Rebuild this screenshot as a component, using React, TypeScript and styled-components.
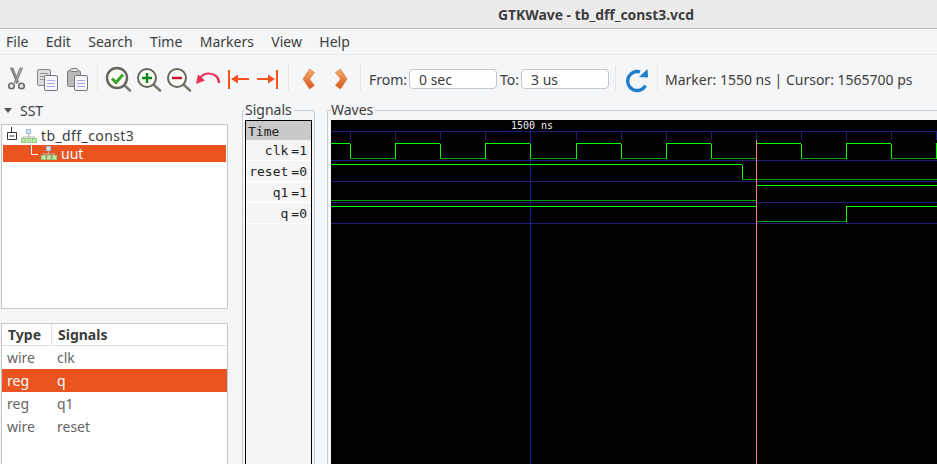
import styled, { createGlobalStyle } from 'styled-components'

const UI_FONT = '"Noto Sans", "Open Sans", sans-serif'
const MONO_FONT = '"DejaVu Sans Mono", "Liberation Mono", monospace'
const ORANGE = '#e95420'

const GlobalStyle = createGlobalStyle`
  html, body {
    margin: 0;
    padding: 0;
    background: #f5f6f7;
  }
`

const Window = styled.div`
  width: 937px;
  height: 464px;
  overflow: hidden;
  display: flex;
  flex-direction: column;
  background: #f5f6f7;
  color: #3d3d3d;
  font-family: ${UI_FONT};
  font-size: 14px;
`

const TitleBar = styled.div`
  height: 28px;
  flex: none;
  display: flex;
  align-items: center;
  justify-content: center;
  padding-left: 255px;
  background: #ebebeb;
  border-bottom: 1px solid #b9b9b9;
  font-size: 13.9px;
  font-weight: 700;
`

const MenuBar = styled.div`
  height: 25px;
  flex: none;
  display: flex;
  align-items: center;
  padding-left: 6px;
  gap: 17.4px;
  border-bottom: 1px solid #e9eaeb;
`

const MenuItem = styled.span`
  line-height: 25px;
`

const Toolbar = styled.div`
  height: 46px;
  flex: none;
  display: flex;
  align-items: center;
  padding-left: 2px;
`

const ToolButton = styled.div<{ $width?: number }>`
  width: ${({ $width }) => $width ?? 30}px;
  height: 34px;
  flex: none;
  svg {
    display: block;
  }
`

const Separator = styled.div<{ $left?: number; $right?: number }>`
  width: 1px;
  height: 26px;
  flex: none;
  margin: 0 ${({ $right }) => $right ?? 5}px 0 ${({ $left }) => $left ?? 5}px;
  background: #e6e7e8;
`

const FieldLabel = styled.label<{ $width: number; $left?: number }>`
  width: ${({ $width }) => $width}px;
  margin: 2px 0 0 ${({ $left }) => $left ?? 0}px;
  flex: none;
`

const TimeInput = styled.input`
  width: 88px;
  height: 20px;
  box-sizing: border-box;
  flex: none;
  margin: 2px 0 0;
  padding: 0 0 0 9px;
  background: #fff;
  border: 1px solid #c3c6ca;
  border-radius: 4px;
  color: #3d3d3d;
  font-family: ${UI_FONT};
  font-size: 14px;
`

const Status = styled.span`
  margin: 2px 0 0 7px;
  white-space: nowrap;
`

const Main = styled.div`
  flex: 1;
  min-height: 0;
  display: flex;
  margin-bottom: -12px;
`

const LeftColumn = styled.div`
  width: 227px;
  flex: none;
  margin: 0 14px 0 1px;
  display: flex;
  flex-direction: column;
`

const SstHeader = styled.div`
  height: 23px;
  flex: none;
  box-sizing: border-box;
  display: flex;
  align-items: center;
  gap: 8px;
  padding: 0 0 4px 3px;
`

const Triangle = styled.span`
  width: 0;
  height: 0;
  border-left: 4.5px solid transparent;
  border-right: 4.5px solid transparent;
  border-top: 5px solid #555;
`

const TreeBox = styled.div`
  height: 185px;
  flex: none;
  box-sizing: border-box;
  background: #fff;
  border: 1px solid #c3c7cb;
  padding: 2px 1px 0 1px;
`

const TreeRow = styled.div<{ $selected?: boolean }>`
  height: 17.5px;
  display: flex;
  align-items: center;
  padding-left: ${({ $selected }) => ($selected ? 0 : 3)}px;
  background: ${({ $selected }) => ($selected ? ORANGE : 'transparent')};
  color: ${({ $selected }) => ($selected ? '#fff' : '#3d3d3d')};
  svg {
    flex: none;
    display: block;
  }
`

const TreeLabel = styled.span<{ $spacing?: number }>`
  letter-spacing: ${({ $spacing }) => $spacing ?? 0}px;
`

const TableBox = styled.div`
  flex: 1;
  margin-top: 14px;
  background: #fff;
  border: 1px solid #c3c7cb;
  box-sizing: border-box;
`

const TableRow = styled.div<{ $selected?: boolean }>`
  height: 23px;
  display: grid;
  grid-template-columns: 50px 1fr;
  align-items: center;
  background: ${({ $selected }) => ($selected ? ORANGE : 'transparent')};
  color: ${({ $selected }) => ($selected ? '#fff' : '#666')};
`

const TableHead = styled(TableRow)`
  height: 22px;
  border-bottom: 1px solid #dfe1e3;
  box-sizing: border-box;
  color: #3d3d3d;
  font-weight: 700;
`

const Cell = styled.span`
  padding-left: 5px;
  line-height: 21px;
`

const HeadCell = styled(Cell)<{ $divider?: boolean }>`
  padding-left: 6px;
  ${({ $divider }) => ($divider ? 'border-right: 1px solid #dfe1e3;' : '')}
`

const Frame = styled.fieldset<{ $width?: number; $grow?: boolean }>`
  margin: 0;
  padding: 0 2px;
  min-width: 0;
  border: 1px solid #c9cccf;
  border-radius: 2px;
  display: flex;
  ${({ $width }) => ($width ? `width: ${$width}px; flex: none; box-sizing: border-box; margin-right: 12px;` : '')}
  ${({ $grow }) => ($grow ? 'flex: 1; margin-right: -12px;' : '')}
`

const FrameLabel = styled.legend<{ $left?: number }>`
  margin-left: ${({ $left }) => $left ?? 0}px;
  padding: 0 2px 0 0;
  line-height: 17px;
  height: 19px;
`

const SignalBox = styled.div`
  width: 67px;
  height: 100%;
  box-sizing: border-box;
  background: #f5f5f5;
  border: 1px solid #000;
  font-family: ${MONO_FONT};
  font-size: 13px;
  color: #222;
`

const TimeRow = styled.div`
  height: 19px;
  line-height: 21px;
  padding-left: 2px;
  background: #c9c9c9;
`

const SignalRow = styled.div`
  height: 20px;
  line-height: 22px;
  padding-right: 4px;
  display: flex;
  justify-content: flex-end;
  gap: 3px;
  border-bottom: 1px solid #fff;
`

const WaveCanvas = styled.div`
  margin-left: 1px;
  flex: 1;
  min-width: 0;
  background: #000;
  overflow: hidden;
  svg {
    display: block;
  }
`

function ScissorsIcon() {
  return (
    <svg width="30" height="34" viewBox="0 0 30 34">
      <path d="M8.5 7 L11 7 L16.5 21 L15 22.5 Z" fill="#8f8f8f" stroke="#707070" strokeWidth="0.8" />
      <path d="M20.5 7 L18 7 L12.5 21 L14 22.5 Z" fill="#a9a9a9" stroke="#707070" strokeWidth="0.8" />
      <circle cx="9.5" cy="25" r="2.8" fill="#e2e2e2" stroke="#6c6c6c" strokeWidth="1.6" />
      <circle cx="19.5" cy="25" r="2.8" fill="#e2e2e2" stroke="#6c6c6c" strokeWidth="1.6" />
    </svg>
  )
}

function Sheet() {
  return (
    <>
      <rect x="12.5" y="14.5" width="13" height="15" rx="1.5" fill="#f6f6fa" stroke="#777" />
      <path d="M15 19.5 H23 M15 22.5 H23 M15 25.5 H23" stroke="#a8a8f0" strokeWidth="1" />
    </>
  )
}

function CopyIcon() {
  return (
    <svg width="30" height="34" viewBox="0 0 30 34">
      <rect x="5.5" y="8.5" width="13" height="16" rx="1.5" fill="#dcdcdc" stroke="#888" />
      <path d="M8 12.5 H16 M8 15.5 H12 M8 18.5 H12" stroke="#9a9a9a" />
      <Sheet />
    </svg>
  )
}

function PasteIcon() {
  return (
    <svg width="30" height="34" viewBox="0 0 30 34">
      <rect x="5.5" y="9.5" width="13" height="16" rx="2" fill="#b9b9b9" stroke="#777" />
      <rect x="8.5" y="7.5" width="7" height="3" rx="1" fill="#e4e4e4" stroke="#777" />
      <Sheet />
    </svg>
  )
}

function Lens({ r, sw = 2, children }: { r: number; sw?: number; children: React.ReactNode }) {
  return (
    <svg width="30" height="34" viewBox="0 0 30 34">
      <path d="M21 24 L27 29.5" stroke="#7c7c70" strokeWidth="2.6" strokeLinecap="round" />
      <circle cx="14" cy="17" r={r} fill="#fbfbf6" stroke="#66665e" strokeWidth={sw} />
      {children}
    </svg>
  )
}

function UndoIcon() {
  return (
    <svg width="30" height="34" viewBox="0 0 30 34">
      <path d="M26 22 C26 15.5 21 12.5 15.5 12.5 C12 12.5 9.5 14 7.5 16.5" fill="none" stroke="#ee2f55" strokeWidth="2.2" />
      <path d="M3 23 L5 13.5 L12 19.5 Z" fill="#ee2f55" />
    </svg>
  )
}

function BoundIcon({ flip }: { flip?: boolean }) {
  return (
    <svg width="30" height="34" viewBox="0 0 30 34">
      <g transform={flip ? 'translate(30 0) scale(-1 1)' : undefined} fill="#f4511e">
        <rect x="5" y="9" width="2" height="19" />
        <rect x="13" y="17" width="13" height="2" />
        <path d="M8 18 L15 13.5 V22.5 Z" />
      </g>
    </svg>
  )
}

function ChevronIcon({ flip }: { flip?: boolean }) {
  return (
    <svg width="31" height="34" viewBox="0 0 31 34">
      <defs>
        <linearGradient id={flip ? 'chevNext' : 'chevPrev'} x1="0" y1="0" x2="0" y2="1">
          <stop offset="0" stopColor="#f2ae72" />
          <stop offset="0.55" stopColor="#e67d3a" />
          <stop offset="1" stopColor="#d9541c" />
        </linearGradient>
      </defs>
      <path
        d={flip ? 'M15.5 8 L10.5 11.5 L15.5 18 L10.5 24.5 L15.5 28 L22 18 Z' : 'M15.5 8 L20.5 11.5 L15.5 18 L20.5 24.5 L15.5 28 L9 18 Z'}
        fill={`url(#${flip ? 'chevNext' : 'chevPrev'})`}
        stroke="#d8703a"
        strokeWidth="0.6"
      />
    </svg>
  )
}

function ReloadIcon() {
  return (
    <svg width="30" height="34" viewBox="0 0 30 34">
      <path d="M23.5 24.5 A9.5 9.5 0 1 1 18 11" fill="none" stroke="#1d7fcb" strokeWidth="3.4" />
      <path d="M17 16 L26 16.5 L25.5 8 Z" fill="#1d7fcb" />
    </svg>
  )
}

function ModuleIcon() {
  return (
    <svg width="16" height="14" viewBox="0 0 16 14" style={{ marginRight: 4 }}>
      <rect x="5.5" y="0.5" width="4" height="4" fill="#cfe2f6" stroke="#9dbbdc" />
      <path d="M7.5 5 V8 M2 8 H14 M2.5 8 V9 M8 8 V9 M13.5 8 V9" stroke="#b5b5b5" fill="none" />
      <rect x="0.5" y="9.5" width="4" height="4" fill="#bfe8ae" stroke="#8dcf7c" />
      <rect x="6" y="9.5" width="4" height="4" fill="#bfe8ae" stroke="#8dcf7c" />
      <rect x="11.5" y="9.5" width="4" height="4" fill="#bfe8ae" stroke="#8dcf7c" />
    </svg>
  )
}

function ExpanderIcon() {
  return (
    <svg width="15" height="17" viewBox="0 0 15 17">
      <path d="M5.5 0 V5.5 M1.5 5.5 H10.5 V12.5 H1.5 Z M3.5 9 H8.5" fill="none" stroke="#333" />
    </svg>
  )
}

function BranchIcon() {
  return (
    <svg width="38" height="17" viewBox="0 0 38 17">
      <path d="M28.5 0 V9.5 H35" fill="none" stroke="#fff" />
    </svg>
  )
}

// page x/y minus the canvas origin (331, 120)
const PERIOD = 45.1
const ticks = Array.from({ length: 14 }, (_, i) => Math.round(19 + PERIOD * i))
const rowLines = [11, 40, 61, 82, 103]
const HIGH = '#00ff00'
const LOW = '#00a000'

type Seg = { x1: number; y1: number; x2: number; y2: number; color: string }
const hLine = (x1: number, x2: number, y: number, color: string): Seg => ({ x1, y1: y, x2, y2: y, color })
const vLine = (x: number, y1: number, y2: number): Seg => ({ x1: x, y1, x2: x, y2, color: HIGH })

const clkSegs: Seg[] = ticks.flatMap((x, i) => {
  const next = ticks[i + 1] ?? 640
  const high = i % 2 === 1
  return [vLine(x, 23, 38), hLine(x, next, high ? 23 : 38, high ? HIGH : LOW)]
})

const waves: Seg[] = [
  hLine(0, 19, 23, HIGH),
  ...clkSegs,
  hLine(0, 411, 44, HIGH),
  vLine(411, 44, 59),
  hLine(411, 640, 59, LOW),
  hLine(0, 425, 80, LOW),
  hLine(426, 640, 65, HIGH),
  hLine(0, 425, 86, HIGH),
  hLine(426, 515, 101, LOW),
  vLine(515, 86, 101),
  hLine(515, 640, 86, HIGH),
]

function WaveForm() {
  return (
    <svg width="620" height="360" viewBox="0 0 620 360" shapeRendering="crispEdges">
      {rowLines.map(y => (
        <line key={y} x1="0" x2="620" y1={y + 0.5} y2={y + 0.5} stroke="#20207a" />
      ))}
      {ticks.map(x => (
        <line key={x} x1={x + 0.5} x2={x + 0.5} y1="11" y2="20" stroke="#20207a" />
      ))}
      <line x1="199.5" x2="199.5" y1="3" y2="360" stroke="#1c1c8c" />
      <text x="180" y="9" fill="#f0f0f0" fontFamily={MONO_FONT} fontSize="10" shapeRendering="auto">
        1500 ns
      </text>
      {waves.map((s, i) => (
        <line key={i} x1={s.x1} y1={s.y1 + 0.5} x2={s.x2} y2={s.y2 + 0.5} stroke={s.color} />
      ))}
      <line x1="425.5" x2="425.5" y1="20" y2="360" stroke="#ff8080" />
    </svg>
  )
}

const menus = ['File', 'Edit', 'Search', 'Time', 'Markers', 'View', 'Help']
const vars = [
  { type: 'wire', name: 'clk' },
  { type: 'reg', name: 'q', selected: true },
  { type: 'reg', name: 'q1' },
  { type: 'wire', name: 'reset' },
]
const traces = [
  { name: 'clk', value: '=1' },
  { name: 'reset', value: '=0' },
  { name: 'q1', value: '=1' },
  { name: 'q', value: '=0' },
]

export default function App() {
  return (
    <Window>
      <GlobalStyle />
      <TitleBar>GTKWave - tb_dff_const3.vcd</TitleBar>
      <MenuBar>
        {menus.map(m => (
          <MenuItem key={m}>{m}</MenuItem>
        ))}
      </MenuBar>
      <Toolbar>
        <ToolButton><ScissorsIcon /></ToolButton>
        <ToolButton><CopyIcon /></ToolButton>
        <ToolButton><PasteIcon /></ToolButton>
        <Separator />
        <ToolButton>
          <Lens r={10} sw={2.4}>
            <path d="M9 17.5 L13 21.5 L20 13.5" fill="none" stroke="#3aa52b" strokeWidth="3" />
          </Lens>
        </ToolButton>
        <ToolButton>
          <Lens r={9}>
            <path d="M9 17 H19 M14 12 V22" stroke="#0b8a1c" strokeWidth="2.4" />
          </Lens>
        </ToolButton>
        <ToolButton>
          <Lens r={9}>
            <path d="M9 17 H19" stroke="#c8102e" strokeWidth="2.4" />
          </Lens>
        </ToolButton>
        <ToolButton><UndoIcon /></ToolButton>
        <ToolButton><BoundIcon /></ToolButton>
        <ToolButton><BoundIcon flip /></ToolButton>
        <Separator />
        <ToolButton $width={31}><ChevronIcon /></ToolButton>
        <ToolButton $width={31}><ChevronIcon flip /></ToolButton>
        <Separator $left={4} $right={8} />
        <FieldLabel $width={40}>From:</FieldLabel>
        <TimeInput readOnly value="0 sec" />
        <FieldLabel $width={21} $left={3}>To:</FieldLabel>
        <TimeInput readOnly value="3 us" />
        <Separator $left={6} $right={6} />
        <ToolButton><ReloadIcon /></ToolButton>
        <Separator $left={5} $right={0} />
        <Status>Marker: 1550 ns | Cursor: 1565700 ps</Status>
      </Toolbar>
      <Main>
        <LeftColumn>
          <SstHeader>
            <Triangle />
            SST
          </SstHeader>
          <TreeBox>
            <TreeRow>
              <ExpanderIcon />
              <ModuleIcon />
              <TreeLabel $spacing={0.4}>tb_dff_const3</TreeLabel>
            </TreeRow>
            <TreeRow $selected>
              <BranchIcon />
              <ModuleIcon />
              <TreeLabel>uut</TreeLabel>
            </TreeRow>
          </TreeBox>
          <TableBox>
            <TableHead>
              <HeadCell $divider>Type</HeadCell>
              <HeadCell>Signals</HeadCell>
            </TableHead>
            {vars.map(v => (
              <TableRow key={v.type + v.name} $selected={v.selected}>
                <Cell>{v.type}</Cell>
                <Cell>{v.name}</Cell>
              </TableRow>
            ))}
          </TableBox>
        </LeftColumn>
        <Frame $width={73}>
          <FrameLabel>Signals</FrameLabel>
          <SignalBox>
            <TimeRow>Time</TimeRow>
            {traces.map(t => (
              <SignalRow key={t.name}>
                <span>{t.name}</span>
                <span>{t.value}</span>
              </SignalRow>
            ))}
          </SignalBox>
        </Frame>
        <Frame $grow>
          <FrameLabel $left={1}>Waves</FrameLabel>
          <WaveCanvas>
            <WaveForm />
          </WaveCanvas>
        </Frame>
      </Main>
    </Window>
  )
}
